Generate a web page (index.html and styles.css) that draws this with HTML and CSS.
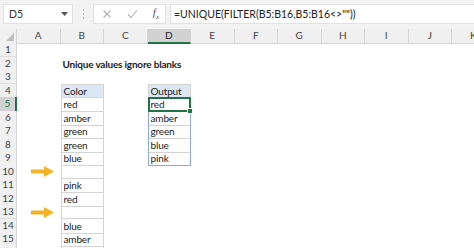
FILE: index.html
```html
<!DOCTYPE html>
<html lang="en">
<head>
    <meta charset="UTF-8">
    <title>Unique values ignore blanks</title>
    <link rel="stylesheet" href="styles.css">
</head>
<body>
    <div class="topbar">
        <div class="namebox">
            <span>D5</span>
            <svg class="caret" width="7" height="4" viewBox="0 0 7 4"><path d="M0 0h7L3.5 4z" fill="#555"/></svg>
        </div>
        <div class="grip"><i></i><i></i><i></i></div>
        <div class="fnbox">
            <svg width="10" height="10" viewBox="0 0 10 10"><path d="M1.5 1.5l7 7M8.5 1.5l-7 7" stroke="#b0b0b0" stroke-width="1.1"/></svg>
            <svg width="11" height="10" viewBox="0 0 11 10"><path d="M1 5.5l3 3L10 1.5" stroke="#b0b0b0" stroke-width="1.1" fill="none"/></svg>
            <span class="fx">f<sub>x</sub></span>
        </div>
        <div class="formula">=UNIQUE(FILTER(B5:B16,B5:B16&lt;&gt;""))</div>
    </div>

    <div class="sheet">
        <div class="row colheads">
            <div class="corner"><svg width="8" height="8" viewBox="0 0 8 8"><path d="M8 0v8H0z" fill="#bdbdbd"/></svg></div>
            <div>A</div><div>B</div><div>C</div><div class="sel">D</div><div>E</div>
            <div>F</div><div>G</div><div>H</div><div>I</div><div>J</div><div>K</div>
        </div>

        <div class="row"><div class="rh">1</div></div>
        <div class="row"><div class="rh">2</div><div></div><div class="title">Unique values ignore blanks</div></div>
        <div class="row"><div class="rh">3</div></div>
        <div class="row"><div class="rh">4</div><div></div><div class="box head top">Color</div><div></div><div class="box head top">Output</div></div>
        <div class="row"><div class="rh sel">5</div><div></div><div class="box">red</div><div></div><div class="out active">red<b class="handle"></b></div></div>
        <div class="row"><div class="rh">6</div><div></div><div class="box">amber</div><div></div><div class="out">amber</div></div>
        <div class="row"><div class="rh">7</div><div></div><div class="box">green</div><div></div><div class="out">green</div></div>
        <div class="row"><div class="rh">8</div><div></div><div class="box">green</div><div></div><div class="out">blue</div></div>
        <div class="row"><div class="rh">9</div><div></div><div class="box">blue</div><div></div><div class="out last">pink</div></div>
        <div class="row"><div class="rh">10</div><div class="arrow"><svg width="23" height="11" viewBox="0 0 23 11"><path d="M0 3.5h13V0l10 5.5-10 5.5V7.5H0z" fill="#f2b324"/></svg></div><div class="box"></div></div>
        <div class="row"><div class="rh">11</div><div></div><div class="box">pink</div></div>
        <div class="row"><div class="rh">12</div><div></div><div class="box">red</div></div>
        <div class="row"><div class="rh">13</div><div class="arrow"><svg width="23" height="11" viewBox="0 0 23 11"><path d="M0 3.5h13V0l10 5.5-10 5.5V7.5H0z" fill="#f2b324"/></svg></div><div class="box"></div></div>
        <div class="row"><div class="rh">14</div><div></div><div class="box">blue</div></div>
        <div class="row"><div class="rh">15</div><div></div><div class="box">amber</div></div>
        <div class="row"><div class="rh">16</div><div></div><div class="box"></div></div>
    </div>
</body>
</html>
```

FILE: styles.css
```css
body {
    margin: 0;
    width: 474px;
    height: 248px;
    overflow: hidden;
    background-color: #fff;
    font-family: Lato, "Open Sans", sans-serif;
}

/* barra de formulas */
.topbar {
    display: flex;
    align-items: center;
    height: 29px;
    padding: 0 0 1px 3px;
    box-sizing: border-box;
    background-color: #f3f3f3;
}

.namebox,
.fnbox,
.formula {
    height: 20px;
    background-color: #fff;
    border: 1px solid #e2e2e2;
    box-sizing: border-box;
    display: flex;
    align-items: center;
}

.namebox {
    width: 70px;
    padding: 0 4px 0 5px;
    justify-content: space-between;
    font-size: 10.5px;
    color: #333;
}

.grip {
    width: 20px;
    display: flex;
    flex-direction: column;
    align-items: center;
    gap: 2px;
}

.grip i {
    width: 1px;
    height: 2px;
    background-color: #b8b8b8;
}

.fnbox {
    width: 73px;
    padding: 0 6px 0 8px;
    justify-content: space-between;
}

.fx {
    font-family: "Liberation Serif", serif;
    font-style: italic;
    font-size: 11px;
    color: #555;
}

.fx sub {
    font-size: 7px;
}

.formula {
    flex: 1;
    margin-left: 4px;
    padding-left: 3px;
    border-right: none;
    font-size: 10.5px;
    color: #222;
}

/* hoja */
.row {
    display: grid;
    grid-template-columns: 17px repeat(11, 43.5px);
    height: 13.5px;
    font-size: 10px;
    letter-spacing: -0.15px;
    color: #222;
}

.row > div {
    box-sizing: border-box;
    line-height: 14px;
    white-space: nowrap;
}

.colheads {
    height: 14px;
    background-color: #f0f0f0;
    letter-spacing: 0;
    color: #444;
}

.colheads > div {
    text-align: center;
    line-height: 13px;
    border-right: 1px solid #d6d6d6;
    border-bottom: 1px solid #d6d6d6;
}

.colheads .sel {
    background-color: #d2d2d2;
    border-bottom: 2px solid #217346;
    color: #222;
}

.colheads .corner {
    display: flex;
    align-items: flex-end;
    justify-content: flex-end;
    padding: 0 2px 2px 0;
}

.rh {
    background-color: #f0f0f0;
    border-right: 1px solid #d6d6d6;
    border-bottom: 1px solid #dedede;
    text-align: center;
    letter-spacing: 0;
    color: #444;
}

.row > .rh {
    line-height: 13px;
}

.rh.sel {
    background-color: #d2d2d2;
    border-right: 2px solid #217346;
    color: #217346;
}

.title {
    font-weight: bold;
    padding-left: 2px;
    letter-spacing: -0.2px;
}

.box {
    border: 1px solid #d4d4d4;
    border-top: none;
    padding-left: 2px;
}

.box.top {
    border-top: 1px solid #d4d4d4;
}

.row > .top {
    line-height: 12px;
}

.head {
    background-color: #dde7f3;
}

.out {
    border: 1px solid #8eaadb;
    border-top: none;
    border-bottom-color: #d4d4d4;
    padding-left: 2px;
}

.out.last {
    border-bottom-color: #8eaadb;
}

.row > .active {
    position: relative;
    border: 2px solid #217346;
    padding-left: 1px;
    line-height: 11px;
}

.handle {
    position: absolute;
    right: -4px;
    bottom: -4px;
    width: 4px;
    height: 4px;
    background-color: #217346;
    border: 1px solid #fff;
}

.arrow {
    display: flex;
    align-items: center;
    padding-left: 14px;
}
```
